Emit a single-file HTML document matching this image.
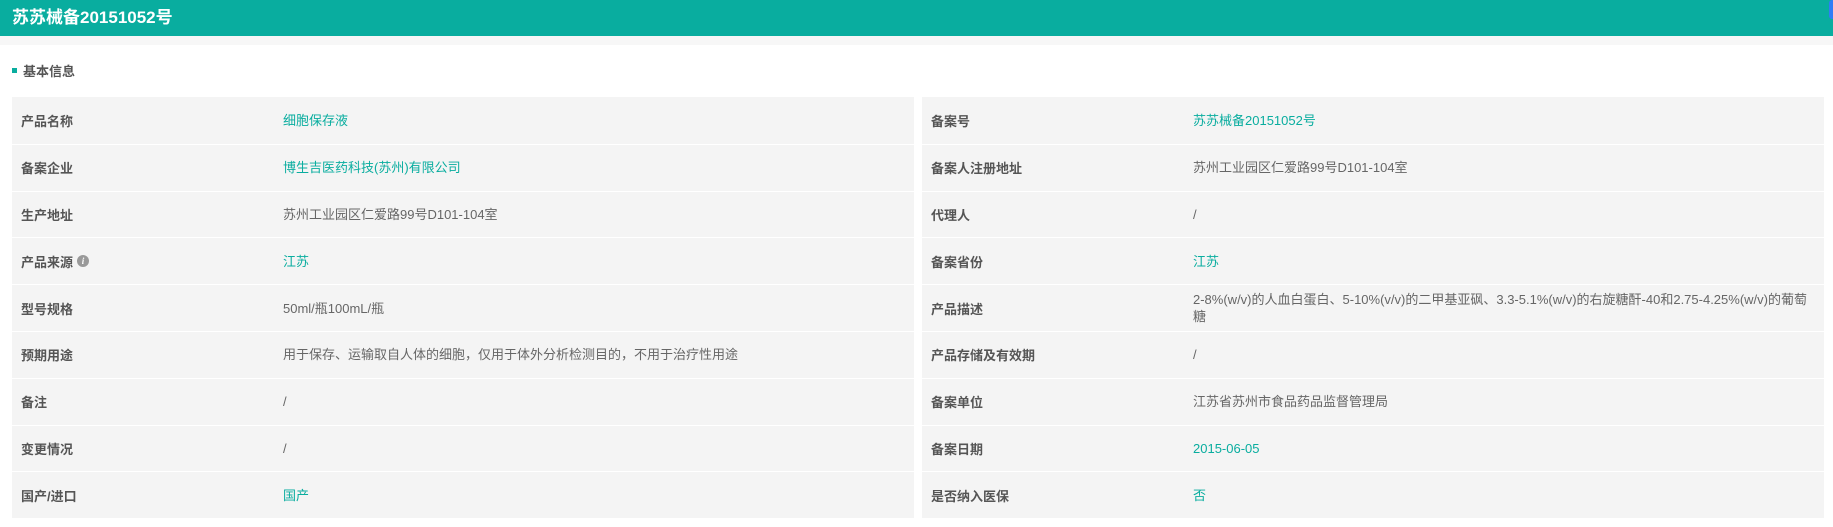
<!DOCTYPE html>
<html><head><meta charset="utf-8"><style>
*{margin:0;padding:0;box-sizing:border-box}
body{width:1833px;height:527px;background:#fff;font-family:"Liberation Sans","Noto Sans CJK SC",sans-serif;position:relative;overflow:hidden}
.hd{height:36px;background:#09ad9f;color:#fff;font-weight:bold;font-size:17px;line-height:36px;padding-left:12px}
.strip{height:9px;background:#f7f7f7}
.sec{position:absolute;left:12px;top:63px;font-size:13px;font-weight:bold;color:#555;line-height:18px}
.sec:before{content:"";display:inline-block;width:5px;height:5px;background:#09ad9f;margin-right:6px;vertical-align:middle;position:relative;top:-2px}
.tbl{position:absolute;top:97px;width:902px}
.row{height:46.8px;background:#f4f4f4;border-top:1px solid #fff;position:relative;font-size:13px}
.row:first-child{border-top:none}
.l{position:absolute;left:9px;top:0;bottom:0;display:flex;align-items:center;font-weight:bold;color:#555}
.v{position:absolute;left:271px;right:10px;top:0;bottom:0;display:flex;align-items:center;color:#666;line-height:17px}
.t{color:#09ad9f}
.i{display:inline-block;width:12px;height:12px;border-radius:50%;background:#999;color:#fff;font-size:9px;font-style:italic;text-align:center;line-height:12px;margin-left:4px;font-family:"Liberation Serif",serif;font-weight:bold}
.blue{position:absolute;right:0;top:0;width:4px;height:19px;background:#2f7df6;border-radius:3px 0 0 3px}
</style></head><body>
<div class="hd">苏苏械备20151052号</div><div class="blue"></div>
<div class="strip"></div>
<div class="sec">基本信息</div>
<div class="tbl" style="left:12px">
<div class="row"><div class="l">产品名称</div><div class="v t">细胞保存液</div></div>
<div class="row"><div class="l">备案企业</div><div class="v t">博生吉医药科技(苏州)有限公司</div></div>
<div class="row"><div class="l">生产地址</div><div class="v">苏州工业园区仁爱路99号D101-104室</div></div>
<div class="row"><div class="l">产品来源<span class="i">i</span></div><div class="v t">江苏</div></div>
<div class="row"><div class="l">型号规格</div><div class="v">50ml/瓶100mL/瓶</div></div>
<div class="row"><div class="l">预期用途</div><div class="v">用于保存、运输取自人体的细胞，仅用于体外分析检测目的，不用于治疗性用途</div></div>
<div class="row"><div class="l">备注</div><div class="v">/</div></div>
<div class="row"><div class="l">变更情况</div><div class="v">/</div></div>
<div class="row"><div class="l">国产/进口</div><div class="v t">国产</div></div>
</div>
<div class="tbl" style="left:922px">
<div class="row"><div class="l">备案号</div><div class="v t">苏苏械备20151052号</div></div>
<div class="row"><div class="l">备案人注册地址</div><div class="v">苏州工业园区仁爱路99号D101-104室</div></div>
<div class="row"><div class="l">代理人</div><div class="v">/</div></div>
<div class="row"><div class="l">备案省份</div><div class="v t">江苏</div></div>
<div class="row"><div class="l">产品描述</div><div class="v">2-8%(w/v)的人血白蛋白、5-10%(v/v)的二甲基亚砜、3.3-5.1%(w/v)的右旋糖酐-40和2.75-4.25%(w/v)的葡萄糖</div></div>
<div class="row"><div class="l">产品存储及有效期</div><div class="v">/</div></div>
<div class="row"><div class="l">备案单位</div><div class="v">江苏省苏州市食品药品监督管理局</div></div>
<div class="row"><div class="l">备案日期</div><div class="v t">2015-06-05</div></div>
<div class="row"><div class="l">是否纳入医保</div><div class="v t">否</div></div>
</div>
</body></html>
